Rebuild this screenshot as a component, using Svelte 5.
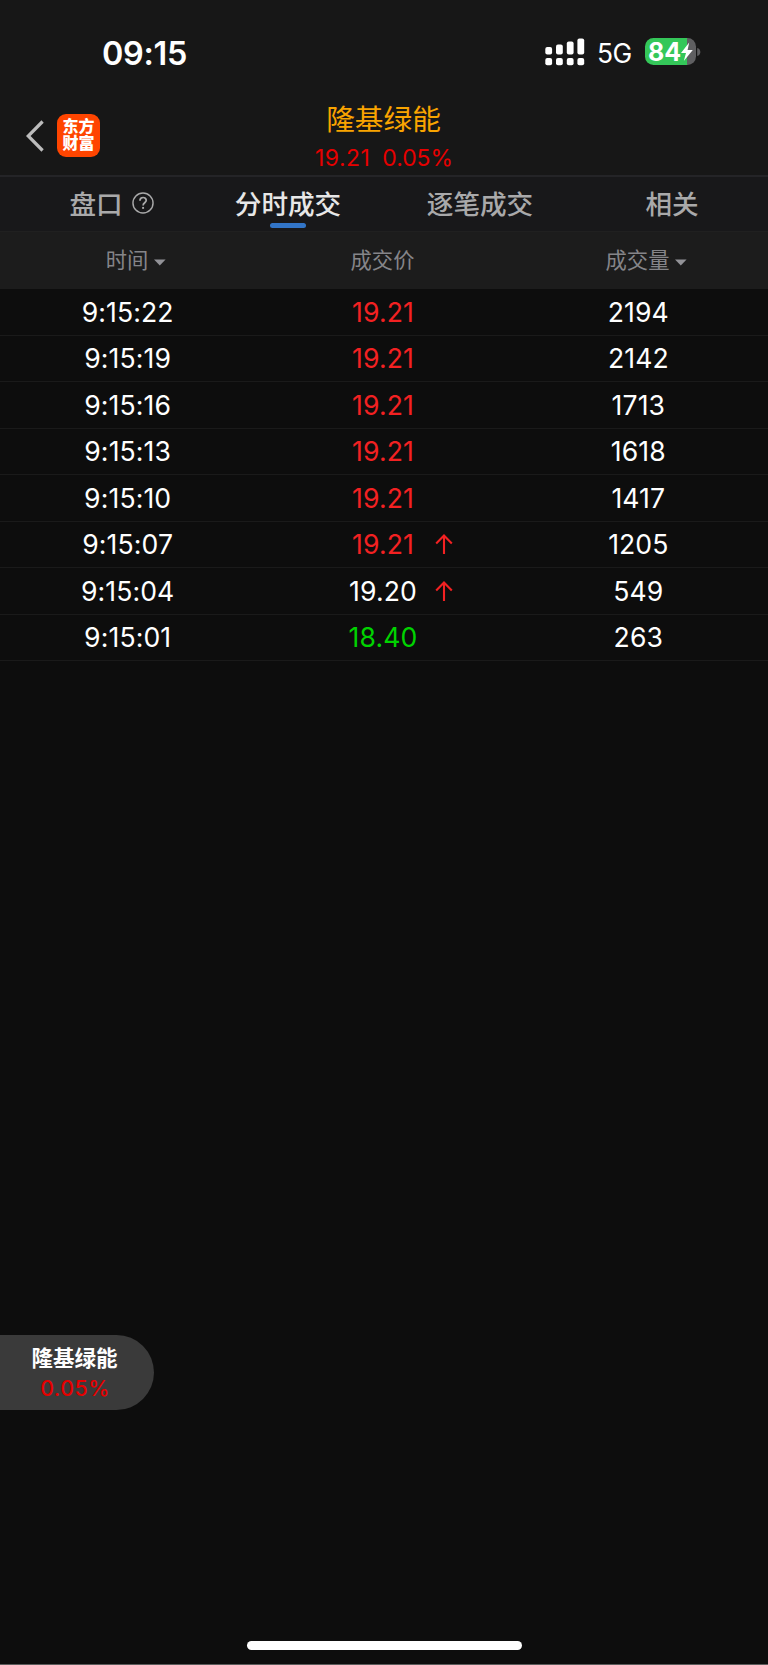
<script>
  const tabs = [
    { label: '盘口', help: true },
    { label: '分时成交', active: true },
    { label: '逐笔成交' },
    { label: '相关' }
  ];
  const columns = [
    { label: '时间', sort: true },
    { label: '成交价' },
    { label: '成交量', sort: true }
  ];
  const trades = [
    { time: '9:15:22', price: '19.21', tone: 'up', volume: '2194' },
    { time: '9:15:19', price: '19.21', tone: 'up', volume: '2142' },
    { time: '9:15:16', price: '19.21', tone: 'up', volume: '1713' },
    { time: '9:15:13', price: '19.21', tone: 'up', volume: '1618' },
    { time: '9:15:10', price: '19.21', tone: 'up', volume: '1417' },
    { time: '9:15:07', price: '19.21', tone: 'up', volume: '1205', rise: true },
    { time: '9:15:04', price: '19.20', tone: 'flat', volume: '549', rise: true },
    { time: '9:15:01', price: '18.40', tone: 'down', volume: '263' }
  ];
</script>

<div class="screen">
  <div class="status">
    <span class="clock">09:15</span>
    <div class="indicators">
      <svg class="signal" width="40" height="28" viewBox="0 0 40 28" fill="#fff">
        <rect x="0.3" y="9" width="6.8" height="7.4" rx="2" />
        <rect x="11" y="6.4" width="6.8" height="10" rx="2" />
        <rect x="21.8" y="3.4" width="6.8" height="13" rx="2" />
        <rect x="32.4" y="0.4" width="6.8" height="16" rx="2" />
        <rect x="0.3" y="20" width="6.8" height="7.2" rx="2" />
        <rect x="11" y="20" width="6.8" height="7.2" rx="2" />
        <rect x="21.8" y="20" width="6.8" height="7.2" rx="2" />
        <rect x="32.4" y="20" width="6.8" height="7.2" rx="2" />
      </svg>
      <span class="network">5G</span>
      <div class="battery">
        <span class="level">84</span>
        <svg class="bolt" width="14" height="20" viewBox="0 0 14 20">
          <path d="M9.2 0.5 1 11h5L3.8 19 12.8 8H7.6z" fill="#fff" />
        </svg>
        <svg class="nub" width="4" height="10" viewBox="0 0 4 10">
          <path d="M0.2 1C4.4 2 4.4 8 0.2 9z" fill="#5f5f61" />
        </svg>
      </div>
    </div>
  </div>

  <header>
    <div class="nav">
      <svg width="18" height="32" viewBox="0 0 18 32">
        <path d="M16.6 1.5 2.2 16l14.4 14.5" fill="none" stroke="#bcbcbc" stroke-width="3.2" />
      </svg>
      <div class="logo"><span>东方</span><span>财富</span></div>
    </div>
    <div class="title">
      <h1>隆基绿能</h1>
      <p><span class="last">19.21</span><span>0.05%</span></p>
    </div>
    <div></div>
  </header>

  <nav class="tabs">
    {#each tabs as tab}
      <div class="tab" class:active={tab.active}>
        <span>{tab.label}</span>
        {#if tab.help}
          <svg width="22" height="22" viewBox="0 0 23 23" fill="none" stroke="#a9a9aa" stroke-width="1.5">
            <circle cx="11.5" cy="11.5" r="10.5" />
            <path d="M8.3 9.2c0-4.6 6.6-4.4 6.6-.5 0 2.6-3.3 2.5-3.3 5.3" stroke-width="1.8" />
            <path d="M11.6 15.6v2" stroke-width="2" />
          </svg>
        {/if}
      </div>
    {/each}
  </nav>

  <div class="grid head">
    {#each columns as column}
      <div class="cell">
        <span class="anchor">
          {column.label}
          {#if column.sort}
            <svg class="caret" width="12" height="7" viewBox="0 0 12 7"><path d="M0 .4h11.6L5.8 6.6z" fill="#929297" /></svg>
          {/if}
        </span>
      </div>
    {/each}
  </div>

  {#each trades as trade}
    <div class="grid row">
      <div class="cell">{trade.time}</div>
      <div class="cell {trade.tone}">
        {trade.price}
        {#if trade.rise}
          <svg class="arrow" width="18" height="21" viewBox="0 0 18 21" fill="none" stroke="#f32122" stroke-width="2.1">
            <path d="M9 20V2M1.2 9.5 9 1.6l7.8 7.9" />
          </svg>
        {/if}
      </div>
      <div class="cell">{trade.volume}</div>
    </div>
  {/each}

  <div class="floating">
    <strong>隆基绿能</strong>
    <span>0.05%</span>
  </div>
  <div class="home"></div>
</div>

<style>
  :global(body) { margin: 0; background: #0d0d0d; }
  * { box-sizing: border-box; }
  .screen {
    position: relative;
    width: 768px;
    height: 1665px;
    overflow: hidden;
    background: #0d0d0d;
    border-bottom: 1px solid #5c5c5c;
    color: #fff;
    font-family: Inter, "Noto Sans CJK SC", sans-serif;
  }
  .status {
    display: flex;
    justify-content: space-between;
    height: 96px;
    padding: 38px 66px 0 102px;
    background: #171717;
  }
  .clock { font-size: 32.4px; line-height: 31px; font-weight: 600; letter-spacing: -0.3px; }
  .indicators { display: flex; align-items: flex-start; }
  .network { margin-left: 12px; width: 48px; font-size: 26.4px; line-height: 31px; letter-spacing: -0.5px; }
  .battery {
    position: relative;
    display: flex;
    width: 51px;
    height: 27px;
    padding-left: 3px;
    border-radius: 8.5px;
    background: linear-gradient(90deg, #34c759 42.5px, #5f5f61 42.5px);
    margin-right: 6px;
  }
  .level { font-size: 25px; line-height: 28px; font-weight: 700; letter-spacing: 0; }
  .bolt { position: absolute; left: 35px; top: 4px; }
  .nub { position: absolute; left: 52px; top: 9px; }
  header {
    display: grid;
    grid-template-columns: 1fr 1fr 1fr;
    height: 81px;
    background: #171717;
    border-bottom: 2px solid #242427;
  }
  .nav { display: flex; gap: 13px; align-items: center; height: 79px; padding-left: 26px; }
  .logo {
    display: flex;
    flex-direction: column;
    align-items: center;
    justify-content: center;
    width: 43px;
    height: 43px;
    margin-top: -1px;
    border-radius: 9px;
    background: #ff4500;
    font-size: 16px;
    line-height: 17.5px;
    font-weight: 900;
  }
  .title { text-align: center; }
  h1 { margin: 8px 1px 0 0; font-size: 28.7px; line-height: 32px; font-weight: 400; color: #f9a400; }
  .title p { display: flex; justify-content: center; gap: 12px; margin: 8px 0 0; font-size: 22.9px; line-height: 28px; color: #e60000; }
  .last { letter-spacing: 0.5px; }
  .tabs { display: grid; grid-template-columns: repeat(4, 1fr); height: 55px; background: #18181a; border-bottom: 1px solid #202020; }
  .tab {
    position: relative;
    display: flex;
    align-items: center;
    justify-content: center;
    gap: 9px;
    height: 54px;
    font-size: 26.6px;
    font-weight: 500;
    color: #a9a9aa;
  }
  .tab span { line-height: 34px; }
  .active { color: #e7e7e7; }
  .active::after {
    content: '';
    position: absolute;
    bottom: 3px;
    width: 36px;
    height: 5px;
    border-radius: 3px;
    background: #3275c7;
  }
  .tab svg { margin: -2px -31px 0 0; }
  .grid { display: grid; grid-template-columns: repeat(3, 1fr); padding-right: 2px; }
  .cell { position: relative; display: flex; justify-content: center; align-items: center; }
  .anchor { position: relative; white-space: nowrap; }
  .head { height: 57px; padding: 0 3px 4px 0; background: #1c1c1c; font-size: 21.3px; color: #858589; }
  .head .cell:first-child { padding-right: 1px; }
  .caret { position: absolute; left: calc(100% + 6px); top: 50%; }
  .row { height: 46.5px; border-bottom: 1.5px solid #1a1a1a; font-size: 26.6px; letter-spacing: 0.1px; }
  .up { color: #f32122; }
  .down { color: #00d300; }
  .arrow { position: absolute; left: calc(50% + 52px); top: 12.5px; }
  .floating {
    position: absolute;
    left: 0;
    top: 1335px;
    display: flex;
    flex-direction: column;
    align-items: center;
    width: 154px;
    height: 75px;
    padding: 9px 5px 0 0;
    border-radius: 0 38px 38px 0;
    background: #3a3a3a;
  }
  .floating strong { font-size: 21.5px; line-height: 28px; font-weight: 600; }
  .floating span { margin-left: 1px; font-size: 21.3px; line-height: 32px; font-weight: 500; letter-spacing: 0.5px; color: #e60000; }
  .home { position: absolute; left: 246.5px; top: 1641px; width: 275px; height: 9px; border-radius: 5px; background: #fff; }
</style>
